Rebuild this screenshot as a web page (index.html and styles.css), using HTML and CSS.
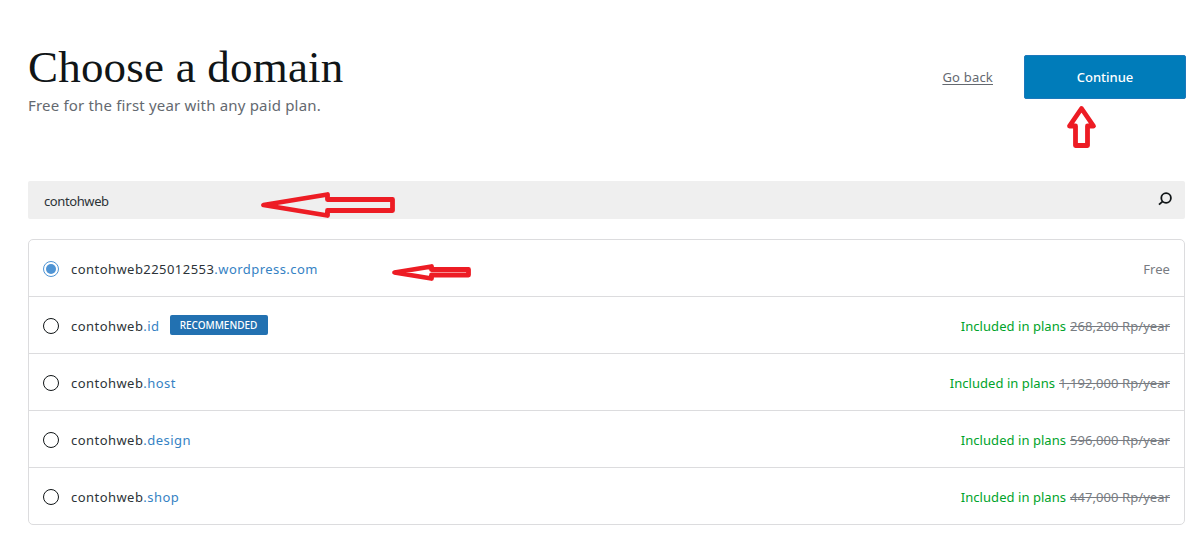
FILE: index.html
```html
<!DOCTYPE html>
<html lang="en">
<head>
<meta charset="utf-8">
<title>Choose a domain</title>
<link rel="stylesheet" href="styles.css">
</head>
<body>
<main class="page">
  <header class="header">
    <div class="intro">
      <h1 class="title">Choose a domain</h1>
      <p class="subtitle">Free for the first year with any paid plan.</p>
    </div>
    <div class="actions">
      <a class="back">Go back</a>
      <button class="continue" type="button"><span class="continue-text">Continue</span></button>
    </div>
  </header>
  <div class="search">
    <span class="query">contohweb</span>
    <svg class="search-icon" width="14" height="14" viewBox="0 0 14 14"><circle cx="8.100" cy="6" r="4.800"/><path d="M4.700 9.300L1 12.700"/></svg>
  </div>
  <ul class="list">
    <li class="row"><span class="radio checked"></span><span class="name long">contohweb225012553<span class="tld">.wordpress.com</span></span><span class="price"><span class="free">Free</span></span></li>
    <li class="row"><span class="radio"></span><span class="name">contohweb<span class="tld">.id</span></span><span class="badge"><span class="badge-text">RECOMMENDED</span></span><span class="price"><span class="included">Included in plans</span><s class="cost">268,200 Rp/year</s></span></li>
    <li class="row"><span class="radio"></span><span class="name">contohweb<span class="tld">.host</span></span><span class="price"><span class="included">Included in plans</span><s class="cost">1,192,000 Rp/year</s></span></li>
    <li class="row"><span class="radio"></span><span class="name">contohweb<span class="tld">.design</span></span><span class="price"><span class="included">Included in plans</span><s class="cost">596,000 Rp/year</s></span></li>
    <li class="row"><span class="radio"></span><span class="name">contohweb<span class="tld">.shop</span></span><span class="price"><span class="included">Included in plans</span><s class="cost">447,000 Rp/year</s></span></li>
  </ul>
  <svg class="arrows" width="1190" height="538" viewBox="0 0 1190 538">
    <path d="M1081.500 108.500L1093.500 126H1087.500V145.500H1075.500V126H1069.500Z"/>
    <path d="M263.500 205L327.500 194.500V199.500H392.500V210.500H327.500V215.500Z"/>
    <path d="M394.500 272.500L431.500 266.500V269.500H468.500V275H431.500V278.500Z"/>
  </svg>
</main>
</body>
</html>
```
FILE: styles.css
```css
* { box-sizing: border-box; }
body { margin: 0; background: #fff; font-family: "Noto Sans", sans-serif; font-size: 13px; color: #2c3338; }
.page { position: relative; width: 1190px; height: 538px; padding: 0 5px 0 28px; overflow: hidden; }
.header { display: flex; justify-content: space-between; height: 181px; margin-right: -1px; }
.intro { padding-top: 42px; }
.title { margin: 0; font: 400 45px/50px "Liberation Serif", serif; letter-spacing: .2px; color: #101517; white-space: nowrap; }
.subtitle { margin: 1px 0 0; font-size: 15px; line-height: 24px; letter-spacing: .18px; color: #646970; white-space: nowrap; }
.actions { display: flex; align-items: center; gap: 31px; height: 44px; margin-top: 55px; }
.back { color: #646970; letter-spacing: .2px; text-decoration: underline; text-underline-offset: 2px; }
.continue { width: 162px; height: 44px; padding: 0; border: 1px solid #1c78bb; border-radius: 2px; background: #007cba; color: #fff; font: 500 13px/20px "Noto Sans", sans-serif; }
.search { display: flex; align-items: center; justify-content: space-between; height: 38px; padding: 0 13px 0 16px; background: #efefef; border-radius: 2px; }
.query { padding-top: 2px; letter-spacing: -.4px; }
.search-icon { fill: none; stroke: #101517; stroke-width: 1.8; margin-top: -2px; }
.list { list-style: none; margin: 20px 0 0; padding: 0; border: 1px solid #dcdcde; border-radius: 5px; }
.row { display: flex; align-items: center; height: 57px; padding: 0 14px; border-bottom: 1px solid #dcdcde; white-space: nowrap; }
.row:last-child { height: 56px; border-bottom: 0; }
.radio { width: 16px; height: 16px; margin: 2px 12px 0 0; border: 1px solid #101517; border-radius: 50%; }
.checked { padding: 2px; border-color: #4f94d4; background: #4f94d4 content-box; }
.name { padding-top: 1px; letter-spacing: .45px; }
.tld { color: #3582c4; }
.badge { display: flex; align-items: center; justify-content: center; width: 98px; height: 20px; margin-left: 10px; border-radius: 2px; background: #2271b1; color: #fff; font-size: 10px; font-weight: 500; }
.price { display: flex; gap: 4px; margin-left: auto; padding-top: 1px; }
.included { color: #00a32a; letter-spacing: .05px; }
.cost, .free { color: #787c82; letter-spacing: .06px; }
.arrows { position: absolute; left: 0; top: 0; fill: none; stroke: #ed1c24; stroke-width: 4.8; stroke-linejoin: round; pointer-events: none; }
```
